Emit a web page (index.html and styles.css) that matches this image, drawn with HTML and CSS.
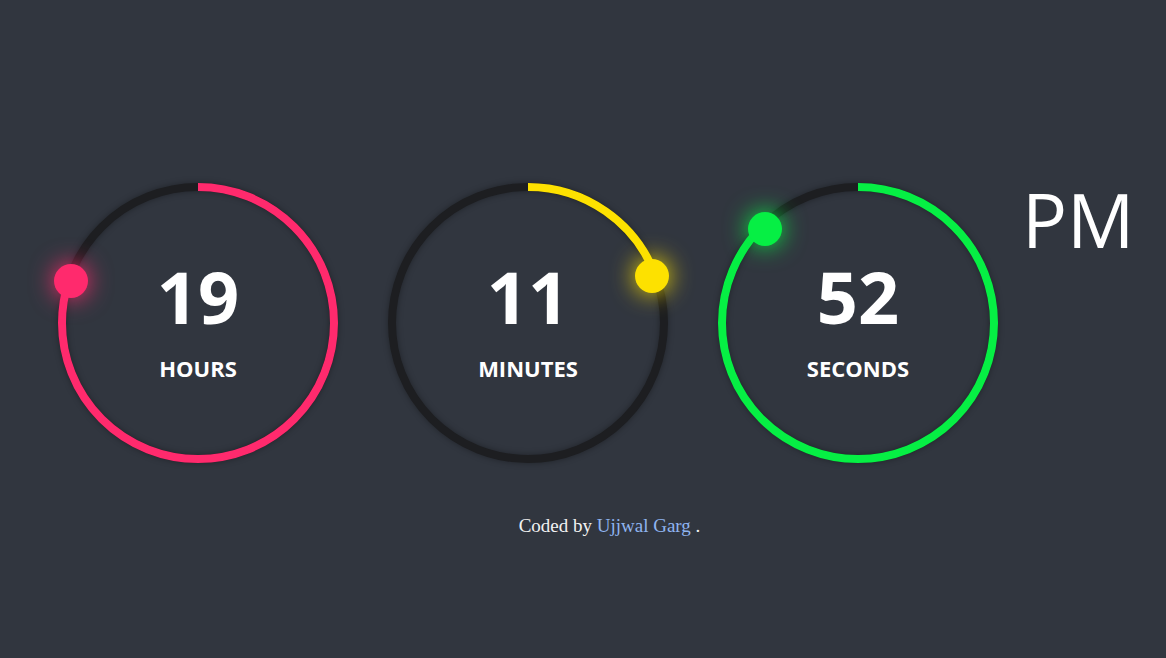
FILE: index.html
```html
<!DOCTYPE html>
<html lang="en">
<head>
<meta charset="utf-8">
<title>Clock</title>
<link rel="stylesheet" href="styles.css">
</head>
<body>
<div class="page">
  <div class="row">
    <div class="dial dial-hours">
      <svg class="ring" width="290" height="290" viewBox="0 0 290 290">
        <circle class="track" cx="145" cy="145" r="136"/>
        <circle class="arc" cx="145" cy="145" r="136" stroke-dasharray="683.0 854.5" transform="rotate(-90 145 145)"/>
        <circle class="dot" cx="18" cy="103" r="17"/>
      </svg>
      <div class="readout">
        <div class="num">19</div>
        <div class="label">HOURS</div>
      </div>
    </div>
    <div class="dial dial-minutes">
      <svg class="ring" width="290" height="290" viewBox="0 0 290 290">
        <circle class="track" cx="145" cy="145" r="136"/>
        <circle class="arc" cx="145" cy="145" r="136" stroke-dasharray="165.0 854.5" transform="rotate(-90 145 145)"/>
        <circle class="dot" cx="269" cy="98" r="17"/>
      </svg>
      <div class="readout">
        <div class="num">11</div>
        <div class="label">MINUTES</div>
      </div>
    </div>
    <div class="dial dial-seconds">
      <svg class="ring" width="290" height="290" viewBox="0 0 290 290">
        <circle class="track" cx="145" cy="145" r="136"/>
        <circle class="arc" cx="145" cy="145" r="136" stroke-dasharray="748.0 854.5" transform="rotate(-90 145 145)"/>
        <circle class="dot" cx="52" cy="51" r="17"/>
      </svg>
      <div class="readout">
        <div class="num">52</div>
        <div class="label">SECONDS</div>
      </div>
    </div>
    <div class="ampm">PM</div>
  </div>
  <p class="credit">Coded by <a href="#" class="author">Ujjwal Garg</a> .</p>
</div>
</body>
</html>
```
FILE: styles.css
```css
html, body {
  margin: 0;
  padding: 0;
}
body {
  background: #31363f;
  width: 1166px;
  height: 658px;
  overflow: hidden;
  font-family: "Open Sans", "Noto Sans", sans-serif;
  color: #ffffff;
}
.page {
  padding: 178px 0 0 53px;
}
.row {
  display: flex;
  align-items: flex-start;
  gap: 40px;
}
.dial {
  display: grid;
  width: 290px;
  height: 290px;
}
.ring,
.readout {
  grid-area: 1 / 1;
}
.ring {
  display: block;
  overflow: visible;
}
.track {
  fill: none;
  stroke: #1d1e21;
  stroke-width: 8;
  filter: drop-shadow(0 0 3px rgba(0, 0, 0, 0.35));
}
.arc {
  fill: none;
  stroke-width: 8;
}
.dial-hours { --c: #ff2a6d; }
.dial-minutes { --c: #fde100; }
.dial-seconds { --c: #06ef44; }
.arc { stroke: var(--c); }
.dot {
  fill: var(--c);
  filter: drop-shadow(0 0 12px var(--c));
}
.readout {
  display: flex;
  flex-direction: column;
  align-items: center;
  padding-top: 82px;
}
.num {
  font-size: 72px;
  font-weight: 700;
  line-height: 1;
}
.label {
  margin-top: 25px;
  font-size: 22px;
  font-weight: 700;
  line-height: 1;
}
.ampm {
  margin-top: 4px;
  margin-left: -21px;
  font-size: 75px;
  font-weight: 400;
  line-height: 1;
}
.credit {
  margin: 47px 0 0;
  text-align: center;
  font-family: "Liberation Serif", "DejaVu Serif", serif;
  font-size: 19px;
  color: #f2f2f2;
}
.author {
  color: #8fb4f0;
  text-decoration: none;
}
```
